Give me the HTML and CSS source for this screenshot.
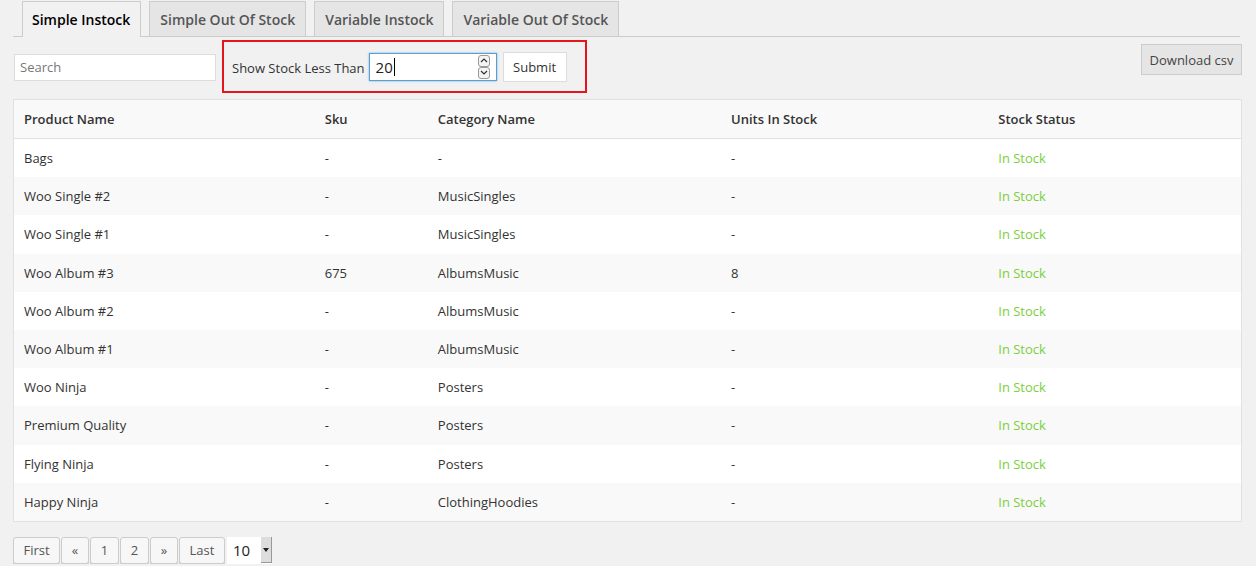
FILE: index.html
```html
<!DOCTYPE html>
<html>
<head>
<meta charset="utf-8">
<link rel="stylesheet" href="styles.css">
</head>
<body>
<div class="page">
  <nav class="tabs">
    <a class="tab active">Simple Instock</a>
    <a class="tab">Simple Out Of Stock</a>
    <a class="tab">Variable Instock</a>
    <a class="tab">Variable Out Of Stock</a>
  </nav>

  <div class="toolbar">
    <div class="search">Search</div>
    <div class="filter">
      <span class="filter-label">Show Stock Less Than</span>
      <div class="num-input">
        <span class="num-val">20</span><span class="caret"></span>
        <div class="spin">
          <span class="spin-btn"><svg width="8" height="5" viewBox="0 0 8 5"><path d="M1 4 L4 1 L7 4" fill="none" stroke="#333" stroke-width="1.2"/></svg></span>
          <span class="spin-btn"><svg width="8" height="5" viewBox="0 0 8 5"><path d="M1 1 L4 4 L7 1" fill="none" stroke="#333" stroke-width="1.2"/></svg></span>
        </div>
      </div>
      <button class="btn-white">Submit</button>
    </div>
    <div class="spacer"></div>
    <button class="btn-gray">Download csv</button>
  </div>

  <table class="stock">
    <colgroup>
      <col class="c1"><col class="c2"><col class="c3"><col class="c4"><col class="c5">
    </colgroup>
    <thead>
      <tr><th>Product Name</th><th>Sku</th><th>Category Name</th><th>Units In Stock</th><th>Stock Status</th></tr>
    </thead>
    <tbody>
      <tr><td>Bags</td><td>-</td><td>-</td><td>-</td><td class="ok">In Stock</td></tr>
      <tr><td>Woo Single #2</td><td>-</td><td>MusicSingles</td><td>-</td><td class="ok">In Stock</td></tr>
      <tr><td>Woo Single #1</td><td>-</td><td>MusicSingles</td><td>-</td><td class="ok">In Stock</td></tr>
      <tr><td>Woo Album #3</td><td>675</td><td>AlbumsMusic</td><td>8</td><td class="ok">In Stock</td></tr>
      <tr><td>Woo Album #2</td><td>-</td><td>AlbumsMusic</td><td>-</td><td class="ok">In Stock</td></tr>
      <tr><td>Woo Album #1</td><td>-</td><td>AlbumsMusic</td><td>-</td><td class="ok">In Stock</td></tr>
      <tr><td>Woo Ninja</td><td>-</td><td>Posters</td><td>-</td><td class="ok">In Stock</td></tr>
      <tr><td>Premium Quality</td><td>-</td><td>Posters</td><td>-</td><td class="ok">In Stock</td></tr>
      <tr><td>Flying Ninja</td><td>-</td><td>Posters</td><td>-</td><td class="ok">In Stock</td></tr>
      <tr><td>Happy Ninja</td><td>-</td><td>ClothingHoodies</td><td>-</td><td class="ok">In Stock</td></tr>
    </tbody>
  </table>

  <div class="pager">
    <span class="pg w-first">First</span>
    <span class="pg w-arrow">&laquo;</span>
    <span class="pg w-num">1</span>
    <span class="pg w-num">2</span>
    <span class="pg w-arrow">&raquo;</span>
    <span class="pg w-last">Last</span>
    <div class="select"><span class="sel-val">10</span><span class="sel-arrow"><svg width="6" height="4" viewBox="0 0 6 4"><path d="M0 0 L6 0 L3 4 Z" fill="#222"/></svg></span></div>
  </div>
</div>
</body>
</html>
```

FILE: styles.css
```css
html, body {
  margin: 0;
  padding: 0;
  background: #f1f1f1;
}
body {
  font-family: "Open Sans", "DejaVu Sans", sans-serif;
  font-size: 13px;
  color: #444;
}
.page {
  padding: 1px 14px 0 13px;
}
.tabs {
  display: flex;
  gap: 8px;
  padding-left: 9px;
  border-bottom: 1px solid #ccc;
  height: 35px;
  width: 1218px;
}
.tab {
  display: flex;
  align-items: center;
  padding: 0 10px;
  height: 34px;
  border: 1px solid #ccc;
  border-bottom: none;
  background: #e5e5e5;
  color: #555;
  font-size: 14px;
  font-weight: 600;
}
.tab.active {
  background: #f1f1f1;
  color: #000;
  height: 35px;
  margin-bottom: -1px;
  padding: 0 10px 0 9px;
}
.toolbar {
  display: flex;
  align-items: flex-start;
  margin-top: 3px;
  height: 52px;
}
.search {
  box-sizing: border-box;
  width: 202px;
  height: 27px;
  margin-top: 14px;
  margin-left: 1px;
  background: #fff;
  border: 1px solid #ddd;
  padding: 0 5px;
  line-height: 25px;
  color: #777;
}
.filter {
  box-sizing: border-box;
  margin-left: 6px;
  width: 365px;
  height: 53px;
  border: 2px solid #e4161c;
  display: flex;
  align-items: center;
  padding-left: 8px;
}
.filter-label {
  color: #333;
  margin-right: 4px;
  margin-top: 2px;
}
.num-input {
  box-sizing: border-box;
  width: 128px;
  height: 28px;
  background: #fff;
  border: 1px solid #5b9dd9;
  box-shadow: 0 0 2px rgba(30,140,190,.6);
  display: flex;
  align-items: center;
  padding-left: 6px;
  position: relative;
}
.num-val {
  font-size: 15px;
  color: #222;
}
.caret {
  width: 1px;
  height: 18px;
  background: #000;
  margin-left: 1px;
}
.spin {
  position: absolute;
  right: 6px;
  top: 1px;
  display: flex;
  flex-direction: column;
}
.spin-btn {
  box-sizing: border-box;
  width: 12px;
  height: 12px;
  border: 1px solid #999;
  border-radius: 3px;
  background: #f4f4f4;
  display: flex;
  align-items: center;
  justify-content: center;
}
.btn-white {
  box-sizing: border-box;
  margin-left: 6px;
  height: 30px;
  width: 64px;
  background: #fff;
  border: 1px solid #ddd;
  font-family: inherit;
  font-size: 13px;
  color: #333;
  padding: 0;
}
.spacer {
  flex: 1;
}
.btn-gray {
  box-sizing: border-box;
  margin-top: 4px;
  height: 31px;
  width: 101px;
  background: #e5e5e5;
  border: 1px solid #ccc;
  font-family: inherit;
  font-size: 13px;
  color: #444;
  padding: 0;
}
.stock {
  margin-top: 7px;
  width: 1229px;
  border-collapse: collapse;
  border: 1px solid #e1e1e1;
  background: #fff;
  table-layout: fixed;
}
.c1 { width: 301px; }
.c2 { width: 113px; }
.c3 { width: 293px; }
.c4 { width: 267px; }
.c5 { width: 253px; }
.stock th {
  text-align: left;
  font-weight: 600;
  color: #333;
  background: #f9f9f9;
  height: 38px;
  padding: 0 10px;
  border-bottom: 1px solid #e1e1e1;
}
.stock td {
  height: 38.2px;
  padding: 0 10px;
  color: #333;
}
.stock tbody tr:nth-child(even) td {
  background: #f9f9f9;
}
.stock td.ok {
  color: #7ad03a;
}
.pager {
  display: flex;
  align-items: center;
  gap: 1px;
  margin-top: 15px;
}
.pg {
  box-sizing: border-box;
  height: 27px;
  display: flex;
  align-items: center;
  justify-content: center;
  background: #f7f7f7;
  border: 1px solid #ccc;
  border-radius: 3px;
  color: #555;
  box-shadow: 0 1px 0 #ccc;
}
.w-first { width: 47px; }
.w-arrow { width: 28px; }
.w-num { width: 29px; }
.w-last { width: 46px; }
.select {
  box-sizing: border-box;
  margin-left: 1px;
  width: 45px;
  height: 27px;
  background: #fff;
  display: flex;
  align-items: center;
  justify-content: space-between;
  padding-left: 6px;
}
.sel-val {
  font-size: 15px;
  color: #222;
}
.sel-arrow {
  width: 10px;
  height: 25px;
  background: #ddd;
  border-right: 1px solid #999;
  border-bottom: 1px solid #999;
  display: flex;
  align-items: center;
  justify-content: center;
}
```
